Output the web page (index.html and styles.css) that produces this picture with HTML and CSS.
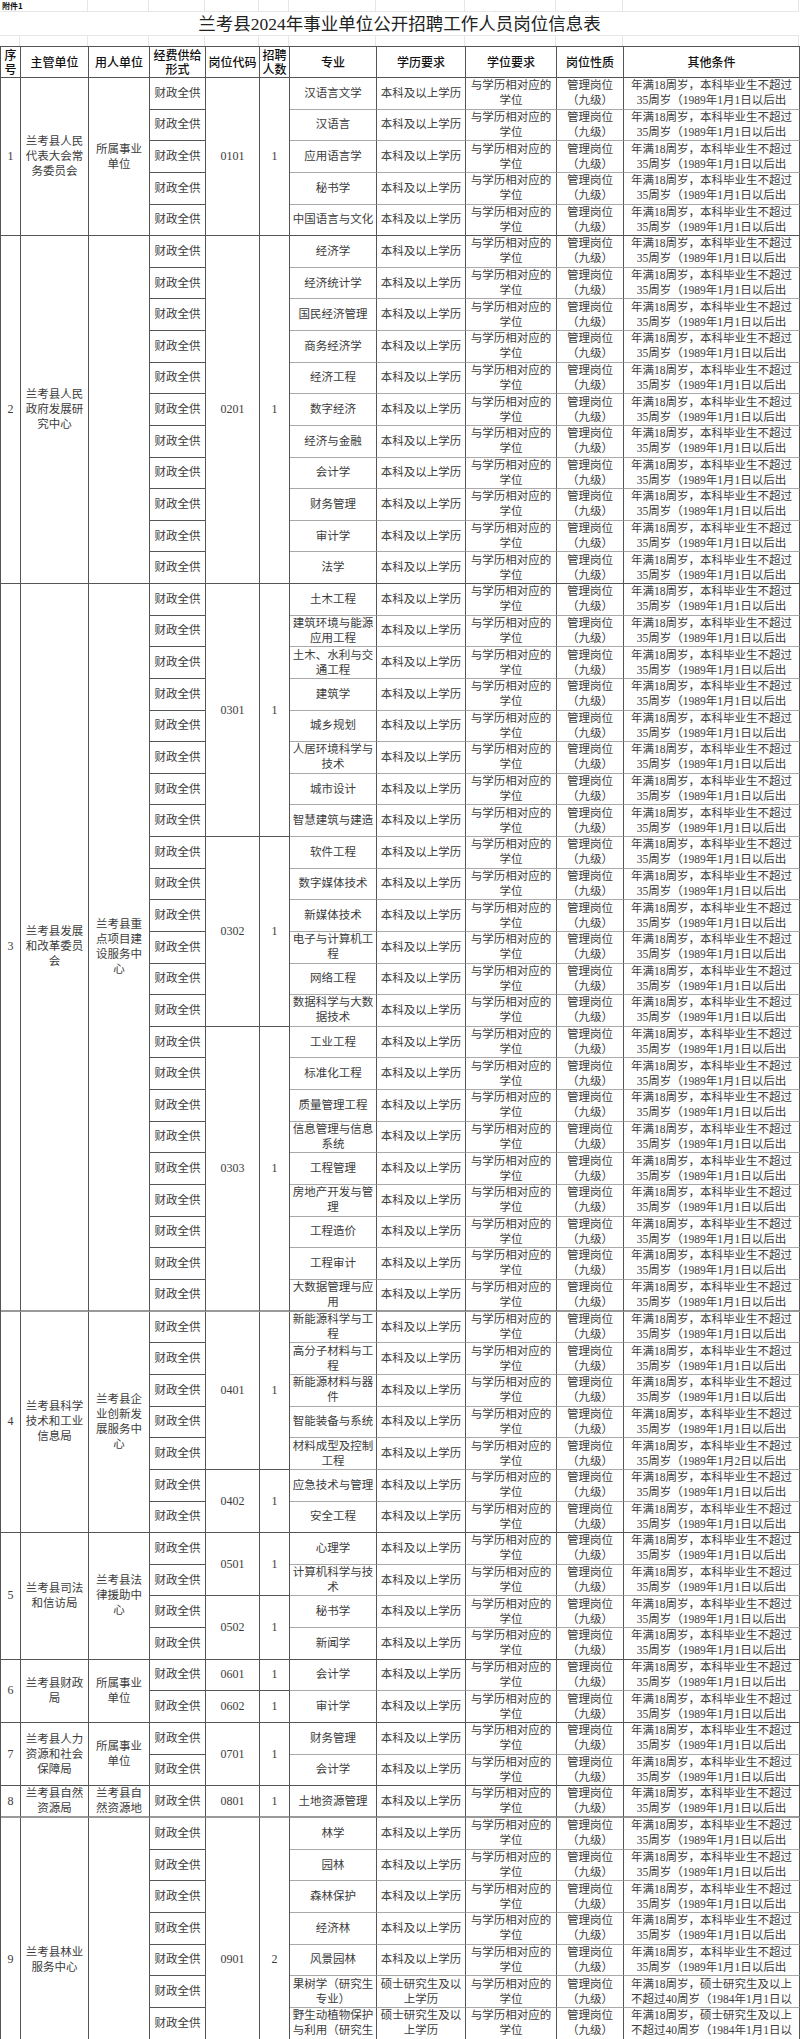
FILE: index.html
```html
<!DOCTYPE html>
<html lang="zh-CN">
<head>
<meta charset="utf-8">
<title>兰考县2024年事业单位公开招聘工作人员岗位信息表</title>
<link rel="stylesheet" href="styles.css">
</head>
<body>
<div class="top">
  <div class="g first">附件1</div><div class="g"></div><div class="g"></div><div class="g"></div><div class="g"></div><div class="g"></div><div class="g"></div><div class="g"></div><div class="g"></div><div class="g"></div>
  <div class="title">兰考县2024年事业单位公开招聘工作人员岗位信息表</div>
  <div class="s"></div><div class="s"></div><div class="s"></div><div class="s"></div><div class="s"></div><div class="s"></div><div class="s"></div><div class="s"></div><div class="s"></div><div class="s"></div><div class="s"></div>
</div>
<table>
<colgroup>
<col class="c1"><col class="c2"><col class="c3"><col class="c4"><col class="c5"><col class="c6"><col class="c7"><col class="c8"><col class="c9"><col class="c10"><col class="c11">
</colgroup>
<thead>
<tr class="h"><th>序号</th><th>主管单位</th><th>用人单位</th><th>经费供给形式</th><th>岗位代码</th><th>招聘人数</th><th>专业</th><th>学历要求</th><th>学位要求</th><th>岗位性质</th><th>其他条件</th></tr>
</thead>
<tbody>
<!-- group 1 -->
<tr><td class="n" rowspan="5">1</td><td class="m" rowspan="5">兰考县人民代表大会常务委员会</td><td class="u" rowspan="5">所属事业单位</td><td class="f"><div>财政全供</div></td><td class="k" rowspan="5">0101</td><td class="p" rowspan="5">1</td><td class="r"><div>汉语言文学</div></td><td class="r"><div>本科及以上学历</div></td><td class="r"><div>与学历相对应的学位</div></td><td class="r"><div>管理岗位<br>（九级）</div></td><td class="r o"><div>年满18周岁，本科毕业生不超过<br>35周岁（1989年1月1日以后出</div></td></tr>
<tr><td class="f"><div>财政全供</div></td><td class="r"><div>汉语言</div></td><td class="r"><div>本科及以上学历</div></td><td class="r"><div>与学历相对应的学位</div></td><td class="r"><div>管理岗位<br>（九级）</div></td><td class="r o"><div>年满18周岁，本科毕业生不超过<br>35周岁（1989年1月1日以后出</div></td></tr>
<tr><td class="f"><div>财政全供</div></td><td class="r"><div>应用语言学</div></td><td class="r"><div>本科及以上学历</div></td><td class="r"><div>与学历相对应的学位</div></td><td class="r"><div>管理岗位<br>（九级）</div></td><td class="r o"><div>年满18周岁，本科毕业生不超过<br>35周岁（1989年1月1日以后出</div></td></tr>
<tr><td class="f"><div>财政全供</div></td><td class="r"><div>秘书学</div></td><td class="r"><div>本科及以上学历</div></td><td class="r"><div>与学历相对应的学位</div></td><td class="r"><div>管理岗位<br>（九级）</div></td><td class="r o"><div>年满18周岁，本科毕业生不超过<br>35周岁（1989年1月1日以后出</div></td></tr>
<tr class="e"><td class="f"><div>财政全供</div></td><td class="r"><div>中国语言与文化</div></td><td class="r"><div>本科及以上学历</div></td><td class="r"><div>与学历相对应的学位</div></td><td class="r"><div>管理岗位<br>（九级）</div></td><td class="r o"><div>年满18周岁，本科毕业生不超过<br>35周岁（1989年1月1日以后出</div></td></tr>
<!-- group 2 -->
<tr><td class="n" rowspan="11">2</td><td class="m" rowspan="11">兰考县人民政府发展研究中心</td><td class="u" rowspan="11"></td><td class="f"><div>财政全供</div></td><td class="k" rowspan="11">0201</td><td class="p" rowspan="11">1</td><td class="r"><div>经济学</div></td><td class="r"><div>本科及以上学历</div></td><td class="r"><div>与学历相对应的学位</div></td><td class="r"><div>管理岗位<br>（九级）</div></td><td class="r o"><div>年满18周岁，本科毕业生不超过<br>35周岁（1989年1月1日以后出</div></td></tr>
<tr><td class="f"><div>财政全供</div></td><td class="r"><div>经济统计学</div></td><td class="r"><div>本科及以上学历</div></td><td class="r"><div>与学历相对应的学位</div></td><td class="r"><div>管理岗位<br>（九级）</div></td><td class="r o"><div>年满18周岁，本科毕业生不超过<br>35周岁（1989年1月1日以后出</div></td></tr>
<tr><td class="f"><div>财政全供</div></td><td class="r"><div>国民经济管理</div></td><td class="r"><div>本科及以上学历</div></td><td class="r"><div>与学历相对应的学位</div></td><td class="r"><div>管理岗位<br>（九级）</div></td><td class="r o"><div>年满18周岁，本科毕业生不超过<br>35周岁（1989年1月1日以后出</div></td></tr>
<tr><td class="f"><div>财政全供</div></td><td class="r"><div>商务经济学</div></td><td class="r"><div>本科及以上学历</div></td><td class="r"><div>与学历相对应的学位</div></td><td class="r"><div>管理岗位<br>（九级）</div></td><td class="r o"><div>年满18周岁，本科毕业生不超过<br>35周岁（1989年1月1日以后出</div></td></tr>
<tr><td class="f"><div>财政全供</div></td><td class="r"><div>经济工程</div></td><td class="r"><div>本科及以上学历</div></td><td class="r"><div>与学历相对应的学位</div></td><td class="r"><div>管理岗位<br>（九级）</div></td><td class="r o"><div>年满18周岁，本科毕业生不超过<br>35周岁（1989年1月1日以后出</div></td></tr>
<tr><td class="f"><div>财政全供</div></td><td class="r"><div>数字经济</div></td><td class="r"><div>本科及以上学历</div></td><td class="r"><div>与学历相对应的学位</div></td><td class="r"><div>管理岗位<br>（九级）</div></td><td class="r o"><div>年满18周岁，本科毕业生不超过<br>35周岁（1989年1月1日以后出</div></td></tr>
<tr><td class="f"><div>财政全供</div></td><td class="r"><div>经济与金融</div></td><td class="r"><div>本科及以上学历</div></td><td class="r"><div>与学历相对应的学位</div></td><td class="r"><div>管理岗位<br>（九级）</div></td><td class="r o"><div>年满18周岁，本科毕业生不超过<br>35周岁（1989年1月1日以后出</div></td></tr>
<tr><td class="f"><div>财政全供</div></td><td class="r"><div>会计学</div></td><td class="r"><div>本科及以上学历</div></td><td class="r"><div>与学历相对应的学位</div></td><td class="r"><div>管理岗位<br>（九级）</div></td><td class="r o"><div>年满18周岁，本科毕业生不超过<br>35周岁（1989年1月1日以后出</div></td></tr>
<tr><td class="f"><div>财政全供</div></td><td class="r"><div>财务管理</div></td><td class="r"><div>本科及以上学历</div></td><td class="r"><div>与学历相对应的学位</div></td><td class="r"><div>管理岗位<br>（九级）</div></td><td class="r o"><div>年满18周岁，本科毕业生不超过<br>35周岁（1989年1月1日以后出</div></td></tr>
<tr><td class="f"><div>财政全供</div></td><td class="r"><div>审计学</div></td><td class="r"><div>本科及以上学历</div></td><td class="r"><div>与学历相对应的学位</div></td><td class="r"><div>管理岗位<br>（九级）</div></td><td class="r o"><div>年满18周岁，本科毕业生不超过<br>35周岁（1989年1月1日以后出</div></td></tr>
<tr class="e"><td class="f"><div>财政全供</div></td><td class="r"><div>法学</div></td><td class="r"><div>本科及以上学历</div></td><td class="r"><div>与学历相对应的学位</div></td><td class="r"><div>管理岗位<br>（九级）</div></td><td class="r o"><div>年满18周岁，本科毕业生不超过<br>35周岁（1989年1月1日以后出</div></td></tr>
<!-- group 3 / 0301 -->
<tr><td class="n pb" rowspan="23">3</td><td class="m pb" rowspan="23">兰考县发展和改革委员会</td><td class="u pb" rowspan="23">兰考县重点项目建设服务中心</td><td class="f"><div>财政全供</div></td><td class="k" rowspan="8">0301</td><td class="p" rowspan="8">1</td><td class="r"><div>土木工程</div></td><td class="r"><div>本科及以上学历</div></td><td class="r"><div>与学历相对应的学位</div></td><td class="r"><div>管理岗位<br>（九级）</div></td><td class="r o"><div>年满18周岁，本科毕业生不超过<br>35周岁（1989年1月1日以后出</div></td></tr>
<tr><td class="f"><div>财政全供</div></td><td class="r"><div>建筑环境与能源应用工程</div></td><td class="r"><div>本科及以上学历</div></td><td class="r"><div>与学历相对应的学位</div></td><td class="r"><div>管理岗位<br>（九级）</div></td><td class="r o"><div>年满18周岁，本科毕业生不超过<br>35周岁（1989年1月1日以后出</div></td></tr>
<tr><td class="f"><div>财政全供</div></td><td class="r"><div>土木、水利与交通工程</div></td><td class="r"><div>本科及以上学历</div></td><td class="r"><div>与学历相对应的学位</div></td><td class="r"><div>管理岗位<br>（九级）</div></td><td class="r o"><div>年满18周岁，本科毕业生不超过<br>35周岁（1989年1月1日以后出</div></td></tr>
<tr><td class="f"><div>财政全供</div></td><td class="r"><div>建筑学</div></td><td class="r"><div>本科及以上学历</div></td><td class="r"><div>与学历相对应的学位</div></td><td class="r"><div>管理岗位<br>（九级）</div></td><td class="r o"><div>年满18周岁，本科毕业生不超过<br>35周岁（1989年1月1日以后出</div></td></tr>
<tr><td class="f"><div>财政全供</div></td><td class="r"><div>城乡规划</div></td><td class="r"><div>本科及以上学历</div></td><td class="r"><div>与学历相对应的学位</div></td><td class="r"><div>管理岗位<br>（九级）</div></td><td class="r o"><div>年满18周岁，本科毕业生不超过<br>35周岁（1989年1月1日以后出</div></td></tr>
<tr><td class="f"><div>财政全供</div></td><td class="r"><div>人居环境科学与技术</div></td><td class="r"><div>本科及以上学历</div></td><td class="r"><div>与学历相对应的学位</div></td><td class="r"><div>管理岗位<br>（九级）</div></td><td class="r o"><div>年满18周岁，本科毕业生不超过<br>35周岁（1989年1月1日以后出</div></td></tr>
<tr><td class="f"><div>财政全供</div></td><td class="r"><div>城市设计</div></td><td class="r"><div>本科及以上学历</div></td><td class="r"><div>与学历相对应的学位</div></td><td class="r"><div>管理岗位<br>（九级）</div></td><td class="r o"><div>年满18周岁，本科毕业生不超过<br>35周岁（1989年1月1日以后出</div></td></tr>
<tr><td class="f"><div>财政全供</div></td><td class="r"><div>智慧建筑与建造</div></td><td class="r"><div>本科及以上学历</div></td><td class="r"><div>与学历相对应的学位</div></td><td class="r"><div>管理岗位<br>（九级）</div></td><td class="r o"><div>年满18周岁，本科毕业生不超过<br>35周岁（1989年1月1日以后出</div></td></tr>
<!-- 0302 -->
<tr><td class="f"><div>财政全供</div></td><td class="k" rowspan="6">0302</td><td class="p" rowspan="6">1</td><td class="r"><div>软件工程</div></td><td class="r"><div>本科及以上学历</div></td><td class="r"><div>与学历相对应的学位</div></td><td class="r"><div>管理岗位<br>（九级）</div></td><td class="r o"><div>年满18周岁，本科毕业生不超过<br>35周岁（1989年1月1日以后出</div></td></tr>
<tr><td class="f"><div>财政全供</div></td><td class="r"><div>数字媒体技术</div></td><td class="r"><div>本科及以上学历</div></td><td class="r"><div>与学历相对应的学位</div></td><td class="r"><div>管理岗位<br>（九级）</div></td><td class="r o"><div>年满18周岁，本科毕业生不超过<br>35周岁（1989年1月1日以后出</div></td></tr>
<tr><td class="f"><div>财政全供</div></td><td class="r"><div>新媒体技术</div></td><td class="r"><div>本科及以上学历</div></td><td class="r"><div>与学历相对应的学位</div></td><td class="r"><div>管理岗位<br>（九级）</div></td><td class="r o"><div>年满18周岁，本科毕业生不超过<br>35周岁（1989年1月1日以后出</div></td></tr>
<tr><td class="f"><div>财政全供</div></td><td class="r"><div>电子与计算机工程</div></td><td class="r"><div>本科及以上学历</div></td><td class="r"><div>与学历相对应的学位</div></td><td class="r"><div>管理岗位<br>（九级）</div></td><td class="r o"><div>年满18周岁，本科毕业生不超过<br>35周岁（1989年1月1日以后出</div></td></tr>
<tr><td class="f"><div>财政全供</div></td><td class="r"><div>网络工程</div></td><td class="r"><div>本科及以上学历</div></td><td class="r"><div>与学历相对应的学位</div></td><td class="r"><div>管理岗位<br>（九级）</div></td><td class="r o"><div>年满18周岁，本科毕业生不超过<br>35周岁（1989年1月1日以后出</div></td></tr>
<tr><td class="f"><div>财政全供</div></td><td class="r"><div>数据科学与大数据技术</div></td><td class="r"><div>本科及以上学历</div></td><td class="r"><div>与学历相对应的学位</div></td><td class="r"><div>管理岗位<br>（九级）</div></td><td class="r o"><div>年满18周岁，本科毕业生不超过<br>35周岁（1989年1月1日以后出</div></td></tr>
<!-- 0303 -->
<tr><td class="f"><div>财政全供</div></td><td class="k pb" rowspan="9">0303</td><td class="p pb" rowspan="9">1</td><td class="r"><div>工业工程</div></td><td class="r"><div>本科及以上学历</div></td><td class="r"><div>与学历相对应的学位</div></td><td class="r"><div>管理岗位<br>（九级）</div></td><td class="r o"><div>年满18周岁，本科毕业生不超过<br>35周岁（1989年1月1日以后出</div></td></tr>
<tr><td class="f"><div>财政全供</div></td><td class="r"><div>标准化工程</div></td><td class="r"><div>本科及以上学历</div></td><td class="r"><div>与学历相对应的学位</div></td><td class="r"><div>管理岗位<br>（九级）</div></td><td class="r o"><div>年满18周岁，本科毕业生不超过<br>35周岁（1989年1月1日以后出</div></td></tr>
<tr><td class="f"><div>财政全供</div></td><td class="r"><div>质量管理工程</div></td><td class="r"><div>本科及以上学历</div></td><td class="r"><div>与学历相对应的学位</div></td><td class="r"><div>管理岗位<br>（九级）</div></td><td class="r o"><div>年满18周岁，本科毕业生不超过<br>35周岁（1989年1月1日以后出</div></td></tr>
<tr><td class="f"><div>财政全供</div></td><td class="r"><div>信息管理与信息系统</div></td><td class="r"><div>本科及以上学历</div></td><td class="r"><div>与学历相对应的学位</div></td><td class="r"><div>管理岗位<br>（九级）</div></td><td class="r o"><div>年满18周岁，本科毕业生不超过<br>35周岁（1989年1月1日以后出</div></td></tr>
<tr><td class="f"><div>财政全供</div></td><td class="r"><div>工程管理</div></td><td class="r"><div>本科及以上学历</div></td><td class="r"><div>与学历相对应的学位</div></td><td class="r"><div>管理岗位<br>（九级）</div></td><td class="r o"><div>年满18周岁，本科毕业生不超过<br>35周岁（1989年1月1日以后出</div></td></tr>
<tr><td class="f"><div>财政全供</div></td><td class="r"><div>房地产开发与管理</div></td><td class="r"><div>本科及以上学历</div></td><td class="r"><div>与学历相对应的学位</div></td><td class="r"><div>管理岗位<br>（九级）</div></td><td class="r o"><div>年满18周岁，本科毕业生不超过<br>35周岁（1989年1月1日以后出</div></td></tr>
<tr><td class="f"><div>财政全供</div></td><td class="r"><div>工程造价</div></td><td class="r"><div>本科及以上学历</div></td><td class="r"><div>与学历相对应的学位</div></td><td class="r"><div>管理岗位<br>（九级）</div></td><td class="r o"><div>年满18周岁，本科毕业生不超过<br>35周岁（1989年1月1日以后出</div></td></tr>
<tr><td class="f"><div>财政全供</div></td><td class="r"><div>工程审计</div></td><td class="r"><div>本科及以上学历</div></td><td class="r"><div>与学历相对应的学位</div></td><td class="r"><div>管理岗位<br>（九级）</div></td><td class="r o"><div>年满18周岁，本科毕业生不超过<br>35周岁（1989年1月1日以后出</div></td></tr>
<tr class="e pbr"><td class="f"><div>财政全供</div></td><td class="r"><div>大数据管理与应用</div></td><td class="r"><div>本科及以上学历</div></td><td class="r"><div>与学历相对应的学位</div></td><td class="r"><div>管理岗位<br>（九级）</div></td><td class="r o"><div>年满18周岁，本科毕业生不超过<br>35周岁（1989年1月1日以后出</div></td></tr>
<!-- group 4 -->
<tr><td class="n" rowspan="7">4</td><td class="m" rowspan="7">兰考县科学技术和工业信息局</td><td class="u" rowspan="7">兰考县企业创新发展服务中心</td><td class="f"><div>财政全供</div></td><td class="k" rowspan="5">0401</td><td class="p" rowspan="5">1</td><td class="r"><div>新能源科学与工程</div></td><td class="r"><div>本科及以上学历</div></td><td class="r"><div>与学历相对应的学位</div></td><td class="r"><div>管理岗位<br>（九级）</div></td><td class="r o"><div>年满18周岁，本科毕业生不超过<br>35周岁（1989年1月1日以后出</div></td></tr>
<tr><td class="f"><div>财政全供</div></td><td class="r"><div>高分子材料与工程</div></td><td class="r"><div>本科及以上学历</div></td><td class="r"><div>与学历相对应的学位</div></td><td class="r"><div>管理岗位<br>（九级）</div></td><td class="r o"><div>年满18周岁，本科毕业生不超过<br>35周岁（1989年1月1日以后出</div></td></tr>
<tr><td class="f"><div>财政全供</div></td><td class="r"><div>新能源材料与器件</div></td><td class="r"><div>本科及以上学历</div></td><td class="r"><div>与学历相对应的学位</div></td><td class="r"><div>管理岗位<br>（九级）</div></td><td class="r o"><div>年满18周岁，本科毕业生不超过<br>35周岁（1989年1月1日以后出</div></td></tr>
<tr><td class="f"><div>财政全供</div></td><td class="r"><div>智能装备与系统</div></td><td class="r"><div>本科及以上学历</div></td><td class="r"><div>与学历相对应的学位</div></td><td class="r"><div>管理岗位<br>（九级）</div></td><td class="r o"><div>年满18周岁，本科毕业生不超过<br>35周岁（1989年1月1日以后出</div></td></tr>
<tr><td class="f"><div>财政全供</div></td><td class="r"><div>材料成型及控制工程</div></td><td class="r"><div>本科及以上学历</div></td><td class="r"><div>与学历相对应的学位</div></td><td class="r"><div>管理岗位<br>（九级）</div></td><td class="r o"><div>年满18周岁，本科毕业生不超过<br>35周岁（1989年1月2日以后出</div></td></tr>
<tr><td class="f"><div>财政全供</div></td><td class="k" rowspan="2">0402</td><td class="p" rowspan="2">1</td><td class="r"><div>应急技术与管理</div></td><td class="r"><div>本科及以上学历</div></td><td class="r"><div>与学历相对应的学位</div></td><td class="r"><div>管理岗位<br>（九级）</div></td><td class="r o"><div>年满18周岁，本科毕业生不超过<br>35周岁（1989年1月1日以后出</div></td></tr>
<tr class="e"><td class="f"><div>财政全供</div></td><td class="r"><div>安全工程</div></td><td class="r"><div>本科及以上学历</div></td><td class="r"><div>与学历相对应的学位</div></td><td class="r"><div>管理岗位<br>（九级）</div></td><td class="r o"><div>年满18周岁，本科毕业生不超过<br>35周岁（1989年1月1日以后出</div></td></tr>
<!-- group 5 -->
<tr><td class="n" rowspan="4">5</td><td class="m" rowspan="4">兰考县司法和信访局</td><td class="u" rowspan="4">兰考县法律援助中心</td><td class="f"><div>财政全供</div></td><td class="k" rowspan="2">0501</td><td class="p" rowspan="2">1</td><td class="r"><div>心理学</div></td><td class="r"><div>本科及以上学历</div></td><td class="r"><div>与学历相对应的学位</div></td><td class="r"><div>管理岗位<br>（九级）</div></td><td class="r o"><div>年满18周岁，本科毕业生不超过<br>35周岁（1989年1月1日以后出</div></td></tr>
<tr><td class="f"><div>财政全供</div></td><td class="r"><div>计算机科学与技术</div></td><td class="r"><div>本科及以上学历</div></td><td class="r"><div>与学历相对应的学位</div></td><td class="r"><div>管理岗位<br>（九级）</div></td><td class="r o"><div>年满18周岁，本科毕业生不超过<br>35周岁（1989年1月1日以后出</div></td></tr>
<tr><td class="f"><div>财政全供</div></td><td class="k" rowspan="2">0502</td><td class="p" rowspan="2">1</td><td class="r"><div>秘书学</div></td><td class="r"><div>本科及以上学历</div></td><td class="r"><div>与学历相对应的学位</div></td><td class="r"><div>管理岗位<br>（九级）</div></td><td class="r o"><div>年满18周岁，本科毕业生不超过<br>35周岁（1989年1月1日以后出</div></td></tr>
<tr class="e"><td class="f"><div>财政全供</div></td><td class="r"><div>新闻学</div></td><td class="r"><div>本科及以上学历</div></td><td class="r"><div>与学历相对应的学位</div></td><td class="r"><div>管理岗位<br>（九级）</div></td><td class="r o"><div>年满18周岁，本科毕业生不超过<br>35周岁（1989年1月1日以后出</div></td></tr>
<!-- group 6 -->
<tr><td class="n" rowspan="2">6</td><td class="m" rowspan="2">兰考县财政局</td><td class="u" rowspan="2">所属事业单位</td><td class="f"><div>财政全供</div></td><td class="k">0601</td><td class="p">1</td><td class="r"><div>会计学</div></td><td class="r"><div>本科及以上学历</div></td><td class="r"><div>与学历相对应的学位</div></td><td class="r"><div>管理岗位<br>（九级）</div></td><td class="r o"><div>年满18周岁，本科毕业生不超过<br>35周岁（1989年1月1日以后出</div></td></tr>
<tr class="e"><td class="f"><div>财政全供</div></td><td class="k">0602</td><td class="p">1</td><td class="r"><div>审计学</div></td><td class="r"><div>本科及以上学历</div></td><td class="r"><div>与学历相对应的学位</div></td><td class="r"><div>管理岗位<br>（九级）</div></td><td class="r o"><div>年满18周岁，本科毕业生不超过<br>35周岁（1989年1月1日以后出</div></td></tr>
<!-- group 7 -->
<tr><td class="n" rowspan="2">7</td><td class="m" rowspan="2">兰考县人力资源和社会保障局</td><td class="u" rowspan="2">所属事业单位</td><td class="f"><div>财政全供</div></td><td class="k" rowspan="2">0701</td><td class="p" rowspan="2">1</td><td class="r"><div>财务管理</div></td><td class="r"><div>本科及以上学历</div></td><td class="r"><div>与学历相对应的学位</div></td><td class="r"><div>管理岗位<br>（九级）</div></td><td class="r o"><div>年满18周岁，本科毕业生不超过<br>35周岁（1989年1月1日以后出</div></td></tr>
<tr class="e"><td class="f"><div>财政全供</div></td><td class="r"><div>会计学</div></td><td class="r"><div>本科及以上学历</div></td><td class="r"><div>与学历相对应的学位</div></td><td class="r"><div>管理岗位<br>（九级）</div></td><td class="r o"><div>年满18周岁，本科毕业生不超过<br>35周岁（1989年1月1日以后出</div></td></tr>
<!-- group 8 -->
<tr class="e pbr"><td class="n">8</td><td class="m"><div>兰考县自然资源局</div></td><td class="u"><div>兰考县自然资源地</div></td><td class="f"><div>财政全供</div></td><td class="k">0801</td><td class="p">1</td><td class="r"><div>土地资源管理</div></td><td class="r"><div>本科及以上学历</div></td><td class="r"><div>与学历相对应的学位</div></td><td class="r"><div>管理岗位<br>（九级）</div></td><td class="r o"><div>年满18周岁，本科毕业生不超过<br>35周岁（1989年1月1日以后出</div></td></tr>
<!-- group 9 -->
<tr><td class="n" rowspan="9">9</td><td class="m" rowspan="9">兰考县林业服务中心</td><td class="u" rowspan="9"></td><td class="f"><div>财政全供</div></td><td class="k" rowspan="9">0901</td><td class="p" rowspan="9">2</td><td class="r"><div>林学</div></td><td class="r"><div>本科及以上学历</div></td><td class="r"><div>与学历相对应的学位</div></td><td class="r"><div>管理岗位<br>（九级）</div></td><td class="r o"><div>年满18周岁，本科毕业生不超过<br>35周岁（1989年1月1日以后出</div></td></tr>
<tr><td class="f"><div>财政全供</div></td><td class="r"><div>园林</div></td><td class="r"><div>本科及以上学历</div></td><td class="r"><div>与学历相对应的学位</div></td><td class="r"><div>管理岗位<br>（九级）</div></td><td class="r o"><div>年满18周岁，本科毕业生不超过<br>35周岁（1989年1月1日以后出</div></td></tr>
<tr><td class="f"><div>财政全供</div></td><td class="r"><div>森林保护</div></td><td class="r"><div>本科及以上学历</div></td><td class="r"><div>与学历相对应的学位</div></td><td class="r"><div>管理岗位<br>（九级）</div></td><td class="r o"><div>年满18周岁，本科毕业生不超过<br>35周岁（1989年1月1日以后出</div></td></tr>
<tr><td class="f"><div>财政全供</div></td><td class="r"><div>经济林</div></td><td class="r"><div>本科及以上学历</div></td><td class="r"><div>与学历相对应的学位</div></td><td class="r"><div>管理岗位<br>（九级）</div></td><td class="r o"><div>年满18周岁，本科毕业生不超过<br>35周岁（1989年1月1日以后出</div></td></tr>
<tr><td class="f"><div>财政全供</div></td><td class="r"><div>风景园林</div></td><td class="r"><div>本科及以上学历</div></td><td class="r"><div>与学历相对应的学位</div></td><td class="r"><div>管理岗位<br>（九级）</div></td><td class="r o"><div>年满18周岁，本科毕业生不超过<br>35周岁（1989年1月1日以后出</div></td></tr>
<tr><td class="f"><div>财政全供</div></td><td class="r"><div>果树学（研究生专业）</div></td><td class="r"><div>硕士研究生及以上学历</div></td><td class="r"><div>与学历相对应的学位</div></td><td class="r"><div>管理岗位<br>（九级）</div></td><td class="r o"><div>年满18周岁，硕士研究生及以上<br>不超过40周岁（1984年1月1日以</div></td></tr>
<tr><td class="f"><div>财政全供</div></td><td class="r"><div>野生动植物保护与利用（研究生</div></td><td class="r"><div>硕士研究生及以上学历</div></td><td class="r"><div>与学历相对应的学位</div></td><td class="r"><div>管理岗位<br>（九级）</div></td><td class="r o"><div>年满18周岁，硕士研究生及以上<br>不超过40周岁（1984年1月1日以</div></td></tr>
<tr class="x"><td class="f"></td><td class="r"></td><td class="r"></td><td class="r"></td><td class="r"></td><td class="r o"></td></tr>
<tr class="x e"><td class="f"></td><td class="r"></td><td class="r"></td><td class="r"></td><td class="r"></td><td class="r o"></td></tr>
</tbody>
</table>
</body>
</html>
```

FILE: styles.css
```css
* { box-sizing: border-box; }

html, body { overflow: hidden; }

body {
  margin: 0;
  background: #fff;
  font-family: "Liberation Serif", "Noto Sans CJK SC", serif;
  color: #3c3c3c;
}

/* sheet rows above the table */
.top {
  display: grid;
  grid-template-columns: 20px 68px 61px 56px 54px 30px 87px 89px 91px 67px 176px;
  width: 800px;
}
.g {
  height: 12px;
  border-right: 1px solid #e6e6e6;
  border-bottom: 1px solid #e6e6e6;
}
.g.first {
  grid-column: span 2;
  font-family: "Noto Sans CJK SC", sans-serif;
  font-size: 8px;
  font-weight: 700;
  line-height: 11px;
  padding-left: 2px;
  color: #111;
}
.title {
  grid-column: 1 / -1;
  height: 24px;
  line-height: 24px;
  text-align: center;
  font-size: 17.5px;
  color: #222;
  border-bottom: 1px solid #e6e6e6;
}
.s {
  height: 10px;
  border-right: 1px solid #e6e6e6;
}

/* table */
table {
  border-collapse: separate;
  border-spacing: 0;
  table-layout: fixed;
  width: 800px;
  border-top: 1px solid #555;
  border-left: 1px solid #555;
}
.c1 { width: 20px; }
.c2 { width: 68px; }
.c3 { width: 61px; }
.c4 { width: 56px; }
.c5 { width: 54px; }
.c6 { width: 30px; }
.c7 { width: 87px; }
.c8 { width: 89px; }
.c9 { width: 91px; }
.c10 { width: 67px; }
.c11 { width: 176px; }

tr.h { height: 31px; }
tbody tr { height: 31.64px; }

th {
  font-family: "Noto Sans CJK SC", sans-serif;
  font-size: 12px;
  font-weight: 500;
  line-height: 14px;
  color: #111;
  padding: 0 1px;
  text-align: center;
  vertical-align: middle;
  border-right: 1px solid #555;
  border-bottom: 1px solid #555;
}

td {
  padding: 0 2px;
  text-align: center;
  vertical-align: middle;
  font-size: 11.5px;
  line-height: 15px;
  border-right: 1px solid #555;
  border-bottom: 1px solid #555;
  overflow: hidden;
}
td > div {
  max-height: 30px;
  overflow: hidden;
}
td.m { padding: 0 3px; }
td.u { padding: 0 4px; }
td.n, td.k, td.p { font-size: 12px; }

td.r { border-bottom-color: #aaa; }
tr.e td.r { border-bottom-color: #555; }
td.o { padding: 0 1px; }
td.o > div { white-space: nowrap; }

tr.pbr td, td.pb { border-bottom: 2px solid #999; }
tr.pbr td.r { border-bottom: 2px solid #999; }
```
